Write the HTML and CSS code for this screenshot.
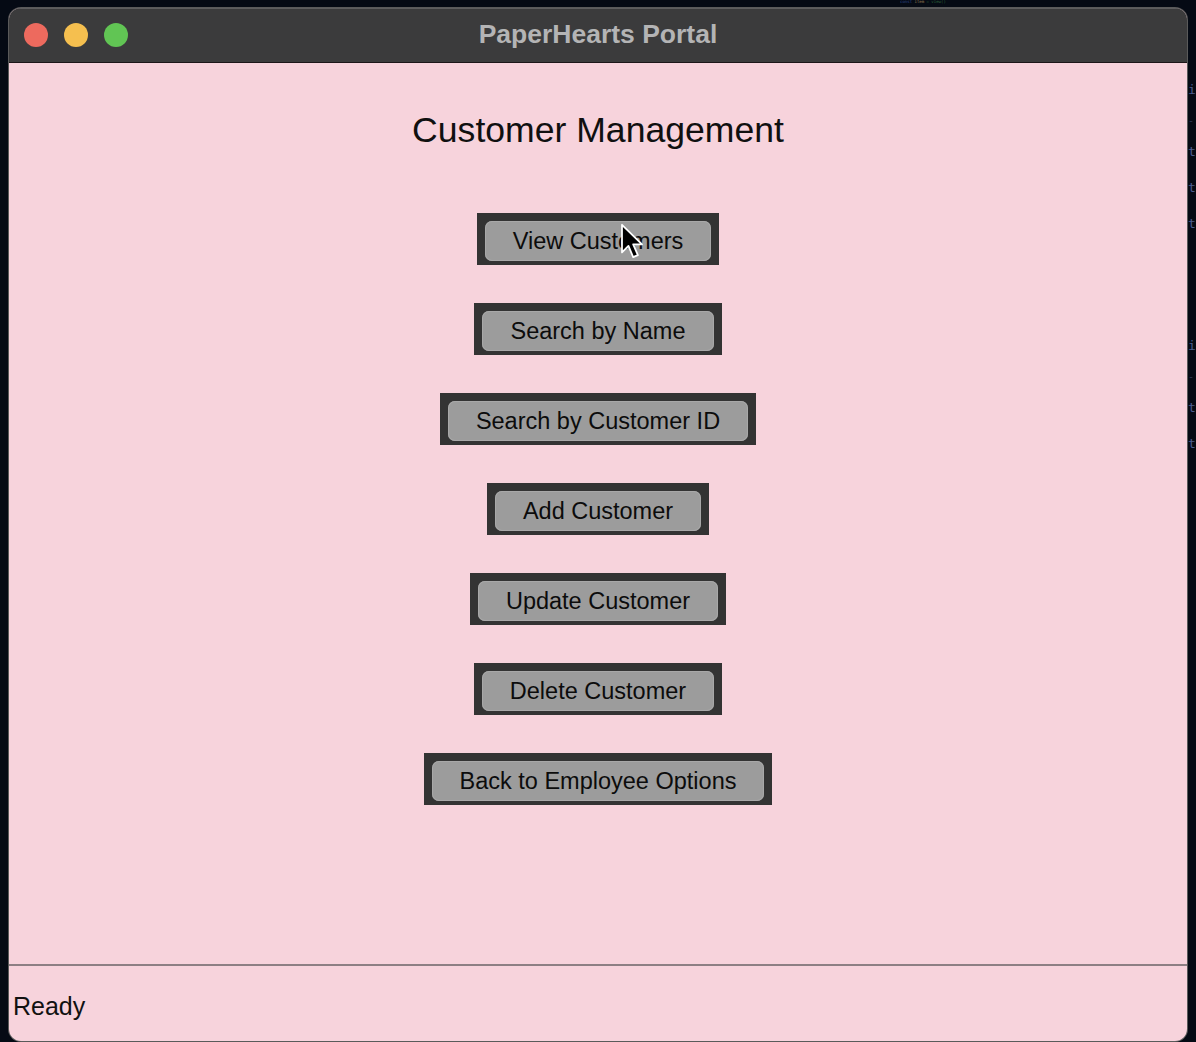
FILE: index.html
```html
<!DOCTYPE html>
<html lang="en">
<head>
<meta charset="utf-8">
<title>PaperHearts Portal</title>
<link rel="stylesheet" href="styles.css">
</head>
<body>
<div class="desktop">
  <div class="editor-strip">
    <div class="code-top"><span class="kw">const</span> <span class="tx">item</span> <span class="st">= view()</span></div>
    <div class="code-col">
      <span class="ln">i</span>
      <span class="ln dash">-</span>
      <span class="ln">t</span>
      <span class="ln">t</span>
      <span class="ln">t</span>
      <span class="ln gap"></span>
      <span class="ln">i</span>
      <span class="ln dash">-</span>
      <span class="ln">t</span>
      <span class="ln">t</span>
    </div>
  </div>
  <div class="window">
    <div class="titlebar">
      <div class="lights">
        <span class="light red"></span>
        <span class="light yellow"></span>
        <span class="light green"></span>
      </div>
      <div class="title">PaperHearts Portal</div>
    </div>
    <div class="content">
      <main class="main">
        <h1 class="heading">Customer Management</h1>
        <div class="buttons">
          <div class="btn-frame"><button class="btn">View Customers</button></div>
          <div class="btn-frame"><button class="btn">Search by Name</button></div>
          <div class="btn-frame"><button class="btn">Search by Customer ID</button></div>
          <div class="btn-frame"><button class="btn">Add Customer</button></div>
          <div class="btn-frame"><button class="btn">Update Customer</button></div>
          <div class="btn-frame"><button class="btn">Delete Customer</button></div>
          <div class="btn-frame"><button class="btn">Back to Employee Options</button></div>
        </div>
      </main>
      <footer class="status">Ready</footer>
    </div>
  </div>
  <svg class="cursor" width="24" height="40" viewBox="0 0 20 34">
    <path d="M1.5 1.5 L1.5 25 L7 19.5 L11 29 L15 27.3 L11 18.2 L18.5 18.2 Z" fill="#000" stroke="#fff" stroke-width="1.5" stroke-linejoin="round"/>
  </svg>
</div>
</body>
</html>
```
FILE: styles.css
```css
* { box-sizing: border-box; }

html, body {
  margin: 0;
  padding: 0;
  width: 1196px;
  height: 1042px;
  overflow: hidden;
  background: #050a14;
}

.desktop {
  position: relative;
  width: 1196px;
  height: 1042px;
  padding: 8px 0 0 9px;
}

.editor-strip {
  position: absolute;
  inset: 0;
  pointer-events: none;
}

.code-top {
  position: absolute;
  left: 900px;
  top: 0;
  font-family: "DejaVu Sans Mono", monospace;
  font-size: 4px;
  line-height: 4px;
  white-space: nowrap;
  opacity: 0.7;
}
.code-top .kw { color: #3d5fb8; }
.code-top .tx { color: #c9a96b; }
.code-top .st { color: #3f8a4a; }

.code-col {
  position: absolute;
  left: 1188px;
  top: 78px;
  display: flex;
  flex-direction: column;
  font-family: "DejaVu Sans Mono", monospace;
  font-size: 13px;
  color: #4c5d8c;
}
.code-col .ln { height: 36px; line-height: 24px; display: block; }
.code-col .dash { height: 26px; color: #2b3450; font-size: 10px; line-height: 14px; }
.code-col .gap { height: 86px; }

.window {
  width: 1178px;
  height: 1033px;
  border-radius: 12px;
  overflow: hidden;
  display: flex;
  flex-direction: column;
  background: #f7d3dc;
  box-shadow: 0 0 0 1px #5a5a5a;
  position: relative;
}

.titlebar {
  height: 55px;
  flex: none;
  background: #3b3b3c;
  border-bottom: 1px solid #1c1618;
  border-top: 1px solid #5d5d5f;
  display: flex;
  align-items: center;
  justify-content: center;
  position: relative;
}

.lights {
  position: absolute;
  left: 15px;
  top: 14px;
  display: flex;
  gap: 16px;
}

.light {
  width: 24px;
  height: 24px;
  border-radius: 50%;
  display: block;
}
.light.red { background: #ed6a5e; }
.light.yellow { background: #f5bf4f; }
.light.green { background: #61c554; }

.title {
  font-family: "Liberation Sans", Arial, sans-serif;
  font-weight: bold;
  font-size: 26.5px;
  color: #b4b4b5;
  margin-top: -2px;
}

.content {
  flex: 1;
  display: flex;
  flex-direction: column;
}

.main {
  flex: 1;
  display: flex;
  flex-direction: column;
  align-items: center;
}

.heading {
  margin: 47px 0 0;
  font-family: "Liberation Sans", Arial, sans-serif;
  font-weight: normal;
  font-size: 35.6px;
  line-height: 40px;
  color: #101010;
}

.buttons {
  margin-top: 63px;
  display: flex;
  flex-direction: column;
  align-items: center;
  gap: 38px;
}

.btn-frame {
  background: #333333;
  padding: 8px 8px 4px 8px;
}

.btn {
  display: block;
  height: 40px;
  padding: 0 28px;
  border: none;
  border-radius: 7px;
  background: #9c9c9c;
  box-shadow: inset 0 0 0 1px #a8a8a8;
  font-family: "Liberation Sans", Arial, sans-serif;
  font-size: 23.5px;
  line-height: 40px;
  color: #0c0c0c;
  cursor: default;
}

.status {
  flex: none;
  height: 77px;
  border-top: 2px solid #8d7f84;
  padding: 25px 0 0 4px;
  font-family: "Liberation Sans", Arial, sans-serif;
  font-size: 25px;
  line-height: 30px;
  color: #111111;
}

.cursor {
  position: absolute;
  left: 620px;
  top: 223px;
}
```
